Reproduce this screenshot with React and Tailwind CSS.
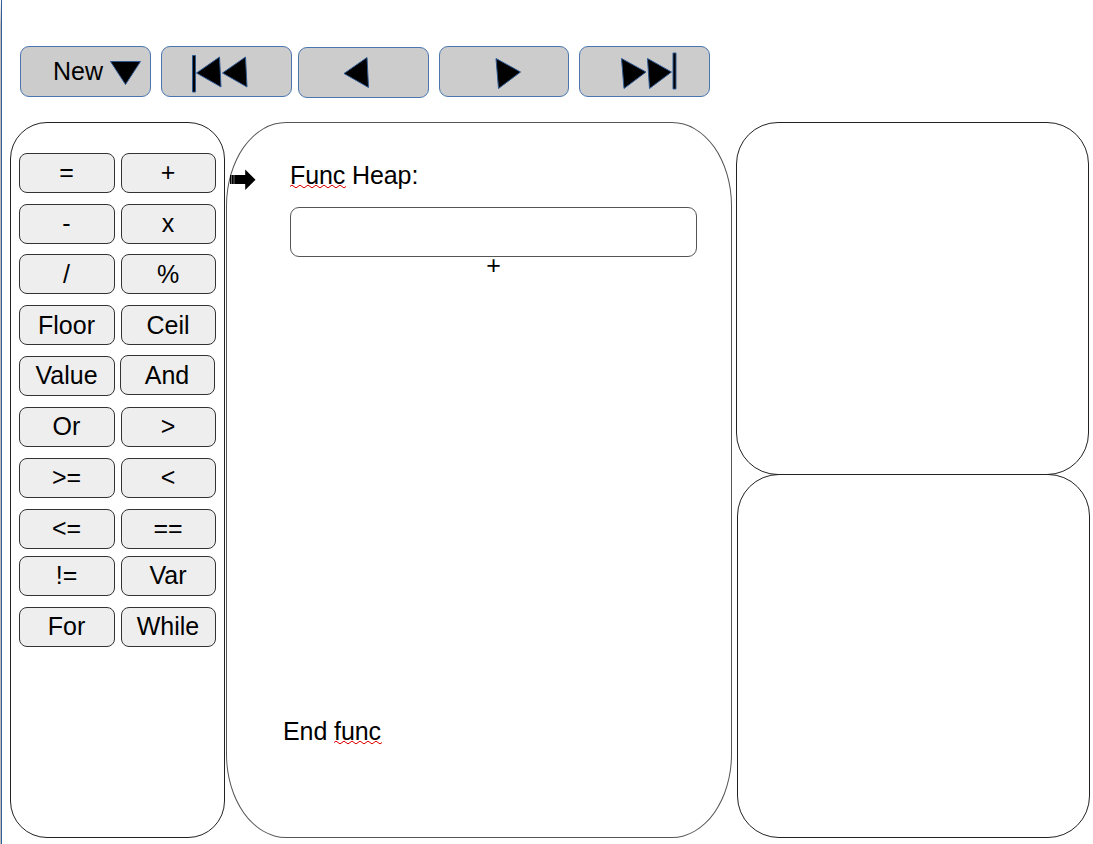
const ROWS = [
  ["=", "+"], ["-", "x"], ["/", "%"], ["Floor", "Ceil"], ["Value", "And"],
  ["Or", ">"], [">=", "<"], ["<=", "=="], ["!=", "Var"], ["For", "While"],
];

const LOW_LABELS = ["/", "%", "Floor", "Ceil", "And"];

function ToolButton({ className = "w-[131px]", label, children }) {
  return (
    <button aria-label={label} className={`h-[51px] shrink-0 rounded-[9px] border border-[#4a76b0] bg-[#cccccc] ${className}`}>
      {children}
    </button>
  );
}

function Glyph({ children }) {
  return (
    <svg width="128" height="49" viewBox="1 1 128 49" fill="#000" stroke="#2f5a94" strokeWidth="1" className="block">
      {children}
    </svg>
  );
}

function Key({ label, className }) {
  return (
    <button className={`flex h-[40px] items-center justify-center rounded-[8px] border border-[#333] bg-[#eeeeee] pr-px leading-none ${LOW_LABELS.includes(label) ? "pt-px" : "pb-px"} ${className}`}>
      {label}
    </button>
  );
}

function Squiggle({ children, width }) {
  const waves = Math.floor(width / 8);
  return (
    <span className="relative inline-block">
      {children}
      <svg className="absolute left-0 top-[23px]" width={width} height="5" fill="none" stroke="#e00000" strokeWidth="1">
        <path d={"M0 2.5" + "q2 -2.8 4 0t4 0".repeat(waves)} />
      </svg>
    </span>
  );
}

export default function App() {
  return (
    <div className="flex h-[844px] w-[1093px] overflow-hidden bg-white font-['Liberation_Sans',Arial,sans-serif] text-[25px] text-black">
      <div className="w-[2px] shrink-0 border-r border-[#2f5f96] bg-linear-to-b from-white from-0% to-[#c0b8b8] to-[3%]" />
      <div className="flex flex-col pl-2 pt-[46px]">
        <header className="flex h-[76px] items-start pl-[10px]">
          <ToolButton label="New">
            <span className="flex items-center pb-px pl-8 leading-none">
              New
              <svg width="33" height="26" viewBox="0 0 33 26" className="ml-[5.5px] mt-[3px]">
                <path d="M1.5 1.5H31.5L16.5 24.5Z" stroke="#2f5a94" />
              </svg>
            </span>
          </ToolButton>
          <ToolButton label="First" className="ml-[10px] w-[131px]">
            <Glyph>
              <path d="M31.5 9.5h3v36.500h-3ZM35.500 27 58.500 11 60 41ZM61.500 27 84.500 11 86 41Z" />
            </Glyph>
          </ToolButton>
          <ToolButton label="Previous" className="ml-[6px] mt-px w-[131px]">
            <Glyph><path d="M46 26.500 69 10.500 70.500 40.500Z" /></Glyph>
          </ToolButton>
          <ToolButton label="Next" className="ml-[10px] w-[130px]">
            <Glyph><path d="M57 12.500 81.500 26 59.500 42.500Z" /></Glyph>
          </ToolButton>
          <ToolButton label="Last" className="ml-[10px] w-[131px]">
            <Glyph><path d="M42.500 12.500 67 26 45 42.500ZM68.500 12.500 92.500 26 70.500 42.500ZM94 7h3v36h-3Z" /></Glyph>
          </ToolButton>
        </header>
        <main className="flex h-[716px]">
          <aside className="h-[716px] w-[215px] shrink-0 rounded-[37px] border border-[#222] pl-[8px] pt-[29.7px]">
            <div className="flex flex-col gap-[10.9px]">
              {ROWS.map(([left, right], i) => (
                <div key={left} className={`flex gap-[6px] ${i === 8 ? "-mt-[4px]" : ""}`}>
                  <Key label={left} className="w-[96px]" />
                  <Key label={right} className={right === "And" ? "relative -left-px -top-px w-[95px]" : "w-[95px]"} />
                </div>
              ))}
            </div>
          </aside>
          <section className="relative ml-px h-[716px] w-[506px] shrink-0 rounded-[60px/84px] border border-[#555] pl-[63px] pt-[38px]">
            <svg className="absolute left-[2px] top-[46px]" width="27" height="22" viewBox="0 0 27 22">
              <path d="M1 6h1.200v9H1ZM2.600 6h2.200v9H2.600ZM5.200 6h11V0.500L26.500 10.800 16.200 21V15H5.200Z" />
            </svg>
            <p className="tracking-[-0.1px] leading-[29px]"><Squiggle width={57}>Func</Squiggle> Heap:</p>
            <div className="mt-[17px] h-[50px] w-[407px] rounded-[9px] border border-[#555]" />
            <p className="-mt-[6px] w-[407px] text-center leading-[29px]">+</p>
            <p className="-ml-[7px] mt-[437px] tracking-[-0.1px] leading-[29px]">End <Squiggle width={49}>func</Squiggle></p>
          </section>
          <div className="ml-[4px] flex flex-col">
            <section className="h-[353px] w-[353px] rounded-[42px] border border-[#222]" />
            <section className="-mt-px ml-px h-[364px] w-[353px] rounded-[42px] border border-[#222]" />
          </div>
        </main>
      </div>
    </div>
  );
}
